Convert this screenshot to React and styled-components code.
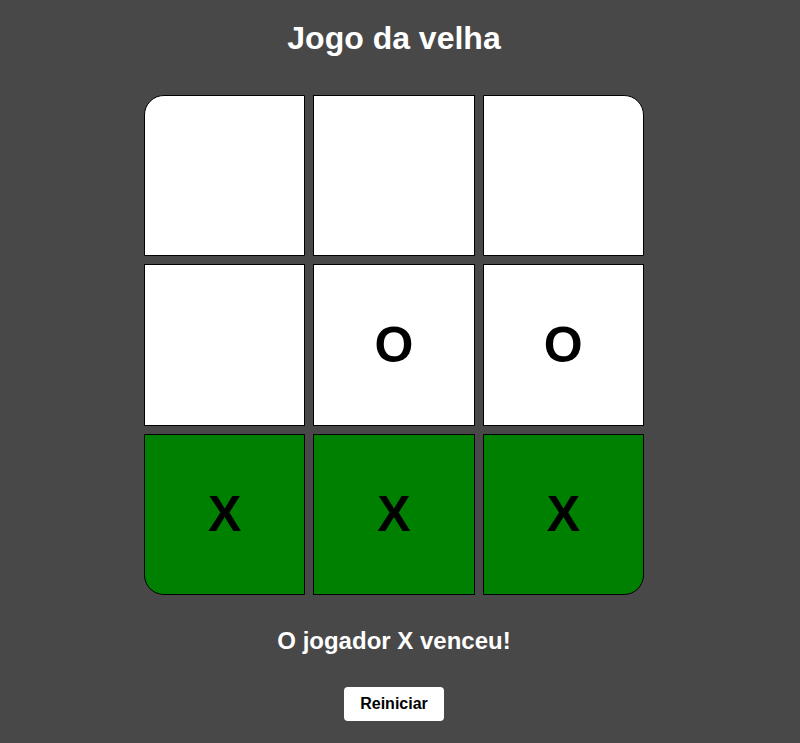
import React, { useState } from 'react';
import styled, { createGlobalStyle } from 'styled-components';

const GlobalStyle = createGlobalStyle`
  body {
    margin: 0;
    background-color: #484848;
    font-family: "Liberation Sans", Arial, sans-serif;
  }
`;

const Page = styled.div`
  display: flex;
  flex-direction: column;
  align-items: center;
  padding-right: 12px;
`;

const Title = styled.h1`
  margin: 20px 0 0;
  font-size: 32px;
  line-height: 37px;
  font-weight: bold;
  color: white;
`;

const Board = styled.div`
  margin-top: 38px;
  width: 500px;
  height: 500px;
  display: grid;
  grid-template-columns: repeat(3, 1fr);
  grid-template-rows: repeat(3, 1fr);
  gap: 8px;
`;

const Cell = styled.button`
  box-sizing: border-box;
  padding: 0;
  margin: 0;
  border: 1px solid black;
  background-color: ${(p) => (p.$win ? '#008000' : 'white')};
  font-family: "Liberation Sans", Arial, sans-serif;
  font-size: 50px;
  font-weight: bold;
  color: black;
  cursor: pointer;
  display: flex;
  align-items: center;
  justify-content: center;

  &:nth-child(1) { border-top-left-radius: 20px; }
  &:nth-child(3) { border-top-right-radius: 20px; }
  &:nth-child(7) { border-bottom-left-radius: 20px; }
  &:nth-child(9) { border-bottom-right-radius: 20px; }
`;

const Status = styled.h2`
  margin: 32px 0 0;
  font-size: 24px;
  line-height: 28px;
  font-weight: bold;
  color: white;
`;

const ResetButton = styled.button`
  margin-top: 32px;
  width: 100px;
  height: 34px;
  border: none;
  border-radius: 4px;
  background: white;
  font-family: "Liberation Sans", Arial, sans-serif;
  font-size: 16px;
  font-weight: bold;
  color: black;
  cursor: pointer;
`;

const initial = [null, null, null, null, 'O', 'O', 'X', 'X', 'X'];
const winLine = [6, 7, 8];

export default function App() {
  const [cells, setCells] = useState(initial);

  return (
    <Page>
      <GlobalStyle />
      <Title>Jogo da velha</Title>
      <Board>
        {cells.map((v, i) => (
          <Cell key={i} $win={winLine.includes(i)}>
            {v}
          </Cell>
        ))}
      </Board>
      <Status>O jogador X venceu!</Status>
      <ResetButton onClick={() => setCells(Array(9).fill(null))}>Reiniciar</ResetButton>
    </Page>
  );
}
